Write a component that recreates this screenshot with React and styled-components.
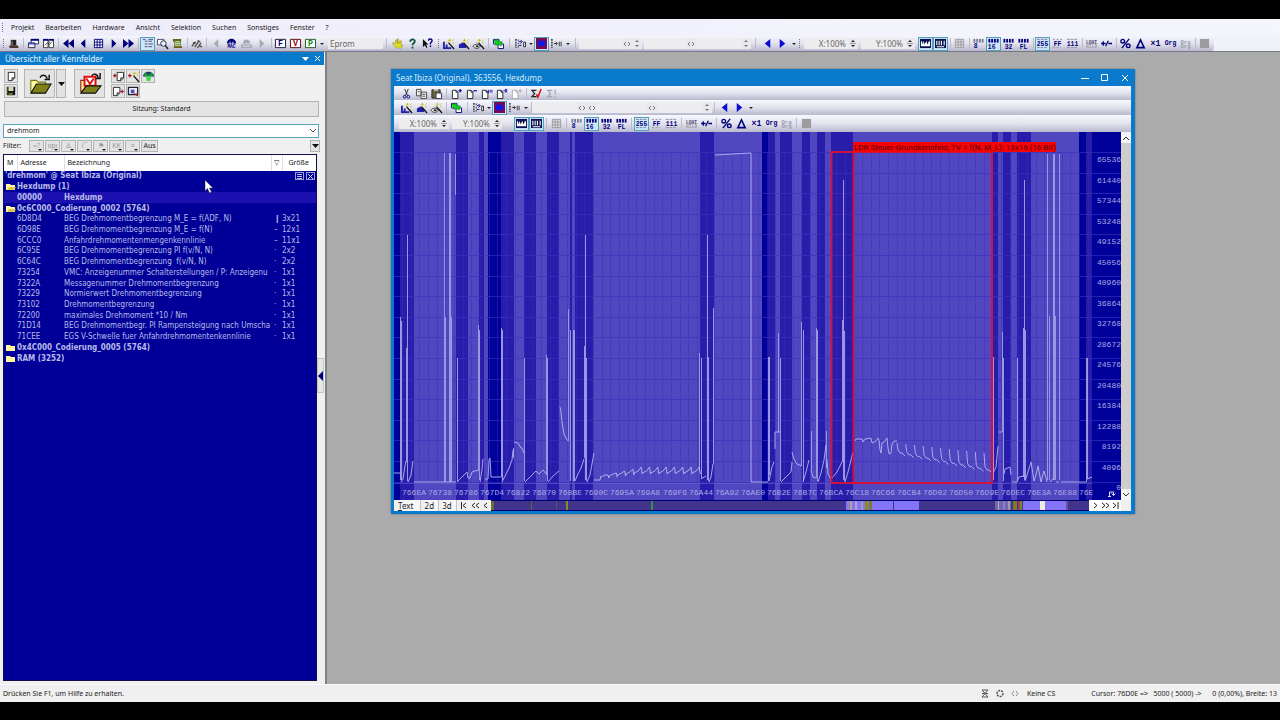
import React from "react";
import styled, { createGlobalStyle, css } from "styled-components";

const GlobalStyle = createGlobalStyle`
  * { box-sizing: border-box; }
  body {
    margin: 0;
    background: #000;
    color: #1c1c1c;
    font: 8px/10px "Noto Sans", sans-serif;
  }
  button, input, select { font: inherit; color: inherit; margin: 0; padding: 0; border: 0; background: none; border-radius: 0; outline: 0; }
  svg { display: block; }
`;

const navy = "#00007c";
const blue = "#0a7acc";

/* ---------- Icons ---------- */

const Txt = ({ x = 6, y = 9, s = 7, c = navy, children }) => (
  <text x={x} y={y} fontSize={s} fill={c} textAnchor="middle" fontWeight="bold" fontFamily="Liberation Mono, monospace">
    {children}
  </text>
);
const Wand = () => (
  <>
    <path d="M6 5 L12 12" stroke="#111" strokeWidth="1.4" />
    <path d="M7 1v3M5.5 2.5h3M10 3l1.5-1.5M4 5l1-1M10 5h1.5" stroke="#c8c000" strokeWidth="1" />
  </>
);
const Page = ({ c = "#222" }) => <path d="M1.5 2.5h4l2 2v7h-6z M5.5 2.5v2h2" fill="#fff" stroke={c} />;
const bits = (c = navy, y = 1) => [0, 3, 6, 9].map((x) => <rect key={x} x={x + 0.5} y={y} width="2" height="4" fill={c} />);

const drawings = {
  hat: <><path d="M3 8V2h6v6z" fill="#222" /><path d="M2 8h8l2 2-2 1H3L1 10z" fill="#4a3030" /><path d="M4 3h1v5H4z" fill="#999" /></>,
  windows: <><path d="M3.500 1.500h8v5h-8z" fill="#fff" stroke="#223" /><path d="M3 1h9v2H3z" fill={navy} /><path d="M.5 5.500h7v5h-7z" fill="#eef" stroke="#223" /><path d="M0 5h8v2H0z" fill="#3949c0" /></>,
  tiles: <><path d="M.5 1.500h5v9h-5zM6.500 1.500h5v9h-5z" fill="#fff" stroke="#333" /><path d="M0 1h6v2H0zM7 1h5v2H7z" fill={navy} /><path d="M2 8l3-3 2 2 3-3" stroke="#333" fill="none" /></>,
  first: <path d="M6 1v10L0 6zM12 1v10L6 6z" fill={navy} />,
  prev: <path d="M8 1v10L3 6z" fill={navy} />,
  next: <path d="M4 1v10l5-5z" fill={navy} />,
  last: <path d="M0 1v10l6-5zM6 1v10l6-5z" fill={navy} />,
  grid: <path d="M1.500 1.500h9v9h-9zM1.500 4.500h9M1.500 7.500h9M4.500 1.500v9M7.500 1.500v9" fill="#fff" stroke={navy} />,
  tree: <path d="M1 1.500h3M3 3.500h3M3 6.500h3M3 9.500h3M7 1.500h5M7 3.500h4M7 6.500h5M7 9.500h4" stroke="#444c70" />,
  magnify: <><path d="M.5 1.500h7v6h-7z" fill="#fff" stroke="#446" /><circle cx="7" cy="6" r="3" fill="#e8f4ff" stroke="#223" /><path d="M9 8l3 4" stroke="#222" strokeWidth="1.600" /></>,
  scroll: <><path d="M1 1h9v3H1zM2 9h9v2H2z" fill="#6b6418" /><path d="M3 3h6v6H3z" fill="#f6f3b0" stroke="#59591d" /><path d="M4 5h4M4 7h4" stroke="#294" /></>,
  wrench: <path d="M1 9l4-5M4 10l5-7M7 11l4-6M2 5l3 1M7 3l3 1M9 8l3 2" stroke="#555" strokeWidth="1.500" />,
  prevOff: <path d="M8 1v10L3 6z" fill="#a9a9b4" />,
  nextOff: <path d="M4 1v10l5-5z" fill="#a9a9b4" />,
  find: <><path d="M1 6c0-7 10-7 10 0z" fill={navy} /><path d="M4 4h1v2H4zM7 4h1v2H7z" fill="#fff" /><Txt y={11} s={5}>MAC</Txt></>,
  findOff: <><path d="M2 6c0-6 8-6 8 0z" fill="#aaaab4" /><path d="M0 7h12v4H0z" fill="#aaaab4" /><path d="M2 9h8" stroke="#e4e4ec" /></>,
  boxF: <><path d="M.5 1.500h11v9H.5z" fill="#fff" stroke="#113" /><Txt s={9}>F</Txt></>,
  boxV: <><path d="M.5 1.500h11v9H.5z" fill="#fff" stroke="#500" /><Txt s={9} c="#a00010">V</Txt></>,
  boxP: <><path d="M.5 1.500h11v9H.5z" fill="#fff" stroke="#151" /><Txt s={9} c="#0a8a20">P</Txt></>,
  hand: <path d="M1 5l3 1V2l1 0 1 4V1h1l1 5 1-3 1 0v5l2 0-2 3H5L1 7z" fill="#e2dc28" stroke="#8d8a1c" strokeWidth=".6" />,
  help: <><path d="M3.500 4c0-3.500 5.500-3 5 0-.3 1.500-2.500 1.500-2.500 4" fill="none" stroke="#115040" strokeWidth="2" /><path d="M5 9.500h2v2H5z" fill="#115040" /></>,
  what: <><path d="M1 1v9l2-2 2 3 1-1-1.500-3H7z" fill="#111" /><path d="M7 3c0-2.500 4-2.500 4 0 0 1.500-2 1.500-2 4M8.500 9h1.500" fill="none" stroke={navy} strokeWidth="1.500" /></>,
  bars: <><path d="M0 4h2v7H0zM3 7h2v4H3zM0 10h9v2H0z" fill="#2020a8" /><Wand /></>,
  box: <><path d="M1 7l4-2 4 3v3H1z" fill="#2020a8" /><Wand /></>,
  eye: <><path d="M0 9c2-3 6-3 8 0-2 3-6 3-8 0z" fill="#fff" stroke="#222" /><path d="M3 8h3v2H3z" fill="#222" /><Wand /></>,
  swap: <><path d="M.5 1.500h6v5h-6zM5.500 6.500h6v5h-6z" fill="#fff" stroke={navy} /><path d="M1 2l5 0 0 2 4 0-1 5-3-2-3 1z" fill="#08d418" stroke="#087014" strokeWidth=".5" /></>,
  rowsIn: <><path d="M1 1v10M3 2.500h1M3 6h1M3 9.500h1" stroke="#222" strokeWidth="1.500" strokeDasharray="2 1" /><path d="M4 4h3M6 2l2 2-2 2M7 8H4" stroke={navy} fill="none" /><path d="M9.500 4.500h2v5h-2z" fill="#fff" stroke="#222" /></>,
  screen: <><path d="M0 0h12v12H0z" fill="#7c0a50" /><path d="M2 3h8v6H2z" fill="#1016e8" /></>,
  rowsOut: <><path d="M1 1v10" stroke="#222" strokeWidth="1.500" strokeDasharray="2 1" /><path d="M3 6h4M5 4l2 2-2 2M9 4v5M11 4v5" stroke="#333" fill="none" /></>,
  goPrev: <path d="M9 1v10L3 6z" fill="#0808d8" />,
  goNext: <path d="M3 1v10l6-5z" fill="#0808d8" />,
  wave: <><path d="M0 1h12v10H0z" fill="#0a1050" /><path d="M1 9V4l1-1 1 4 1-4 1 4 2-4 1 4 2-4 1 1v5z" fill="#fff" /></>,
  comb: <><path d="M0 1h12v10H0z" fill="#0a1050" /><path d="M2 3v5M4.500 3v5M7 3v5M10 3v5M2 9.500h8" stroke="#fff" strokeWidth="1.200" /></>,
  gridOff: <path d="M1.500 1.500h9v9h-9zM1.500 4.500h9M1.500 7.500h9M4.500 1.500v9M7.500 1.500v9" fill="#ddd" stroke="#99999f" />,
  b8: <>{bits("#777b9a")}<Txt x={3} y={11} s={7}>8</Txt></>,
  b16: <>{bits()}<Txt x={4} y={12} s={7}>16</Txt></>,
  b32: <>{bits()}<Txt x={6} y={12} s={7}>32</Txt></>,
  bFl: <>{bits()}<Txt x={6} y={12} s={7}>FL</Txt></>,
  n255: <><path d="M0 1.500h12M0 10.500h12" stroke="#7a7c94" strokeDasharray="3 1" /><Txt y={8.500} s={7}>255</Txt></>,
  nFF: <><path d="M1 1.500h10M1 10.500h9" stroke="#8a8ca0" strokeDasharray="2 2" /><Txt y={8.500} s={7}>FF</Txt></>,
  n111: <><path d="M0 1.500h12M0 10.500h12" stroke="#8a8ca0" strokeDasharray="3 1" /><Txt y={8.500} s={7}>111</Txt></>,
  lohi: <><Txt y={6} s={5} c="#44466a">LOHI</Txt><Txt y={11} s={5} c="#9a9aa6">HILO</Txt></>,
  plusminus: <path d="M0 6h5M2.500 3.500v5M5 9l3-6M8 6h4" stroke={navy} strokeWidth="1.400" />,
  percent: <><circle cx="3" cy="3.500" r="2" fill="none" stroke={navy} strokeWidth="1.500" /><circle cx="9" cy="8.500" r="2" fill="none" stroke={navy} strokeWidth="1.500" /><path d="M2 11l8-10" stroke={navy} strokeWidth="1.500" /></>,
  delta: <path d="M6 2l4 8.500H2z" fill="none" stroke={navy} strokeWidth="1.700" />,
  x1: <Txt y={9} s={9}>×1</Txt>,
  org: <Txt y={8} s={7}>Org</Txt>,
  orgOff: <><Txt y={6} s={6} c="#9a9aa6">Org</Txt><Txt y={11} s={6} c="#9a9aa6">Org</Txt></>,
  square: <path d="M1 1h10v10H1z" fill="#9c9ca0" />,
  cut: <><path d="M4 1l3 7M8 1L5 8" stroke="#222" /><circle cx="4" cy="9.500" r="1.500" fill="none" stroke={navy} /><circle cx="8" cy="9.500" r="1.500" fill="none" stroke={navy} /></>,
  copy: <path d="M.5 1.500h5v7h-5zM5.500 4.500h6v7h-6zM7 7h3M7 9h3M2 4h2" fill="#eee" stroke="#444" />,
  paste: <><path d="M1 2h9v9H1z" fill="#6b6540" stroke="#222" /><path d="M3 1h5v2H3z" fill="#ccc" /><path d="M5.500 5.500h6v6h-6z" fill="#fff" stroke="#336" /></>,
  pagePlus: <><Page /><path d="M8 3h4M10 1v4" stroke="#0808b0" strokeWidth="1.300" /></>,
  pageMinus: <><Page /><path d="M8 3h4" stroke="#0808b0" strokeWidth="1.300" /></>,
  pageBoth: <><Page /><path d="M8 2v4M10 2v3M12 2v3" stroke="#0808b0" /></>,
  pageX: <><Page /><path d="M8 3h2M10 1l2 4M12 1l-2 4" stroke="#0808b0" /></>,
  pageOff: <><Page c="#aaa" /><path d="M8 3h4M10 1v4" stroke="#aaa" /></>,
  sumOk: <><path d="M6 2.500H1l3 3.500-3 3.500h5" fill="none" stroke="#222" strokeWidth="1.300" /><path d="M6 7l1.500 3L11 1" fill="none" stroke="#d81010" strokeWidth="1.700" /></>,
  sumOff: <path d="M7 2.500H2l3 3.500-3 3.500h5M10 2v5M10 9v2" fill="none" stroke="#a4a4ae" strokeWidth="1.300" />,
  page: <path d="M2.500 1.500h7v6l-3 3h-4zM9.500 7.500h-3v3" fill="#fff" stroke="#222" />,
  disk: <><path d="M1 1h10v10H1z" fill="#111" /><path d="M3 1h6v5H3z" fill="#d8d8c0" /><path d="M1 1h1v9H1zM3 8h5v3H3z" fill="#6c6c2c" /></>,
  folder: <><path d="M1 10V4h3l1 1h4v5z" fill="#fffca0" stroke="#76761c" strokeWidth=".6" /><path d="M1 11l3-5h8l-3 5z" fill="#808018" stroke="#111" strokeWidth=".6" /><path d="M6 2.500c1-2 3-1.500 4 .5M11 1v2.500H8.500" fill="none" stroke="#111" strokeWidth=".8" /></>,
  folderV: <><path d="M1 10V4h3v6z" fill="#fffca0" stroke="#8a1c10" strokeWidth=".6" /><path d="M3 2h6v5H3z" fill="#fff" stroke="#e01010" strokeWidth="1.100" /><path d="M4 3l2 3 2-3" fill="none" stroke="#e01010" /><path d="M1 11l3-4h8l-3 4z" fill="#808018" stroke="#111" strokeWidth=".6" /><path d="M7 1.500c1-1.500 3-1 3.500 1M11.500 0v3H9" fill="none" stroke="#111" strokeWidth=".8" /></>,
  importPage: <><path d="M4.500 1.500h7v6l-3 3h-4zM11 7.500H8.500v3" fill="#fff" stroke="#222" /><path d="M0 5h4M2 3v4" stroke="#b01020" strokeWidth="1.300" /></>,
  importWand: <><path d="M0 5h4M2 3v4" stroke="#b01020" strokeWidth="1.300" /><Wand /></>,
  globe: <><path d="M0 6c0-7 12-7 12 0z" fill="#1c3c70" /><path d="M2 2l4 2 4-2 1 4-5-1-5 1z" fill="#18a030" /><path d="M3 6h6l-1 5H4z" fill="#48d858" /></>,
  exportPage: <><path d="M.5 1.500h7v6l-3 3h-4zM7 7.500H4.500v3" fill="#fff" stroke="#222" /><path d="M8 6h4M10 4v4" stroke="#b01020" strokeWidth="1.300" /></>,
  exportPic: <><path d="M.5 1.500h10v8H.5z" fill="#eef" stroke="#223" strokeWidth="1.400" /><path d="M3 4h4v4H3z" fill="#4850b0" /><path d="M7 8l4 3M10 7v4" stroke="#b01020" /></>,
};

const Glyph = styled.svg.attrs({ viewBox: "0 0 12 12", fill: "none", "aria-hidden": true })`
  width: ${(p) => p.$s || 11}px;
  height: ${(p) => p.$s || 11}px;
  flex: none;
  overflow: visible;
`;
const Icon = ({ name, size }) => <Glyph $s={size}>{drawings[name]}</Glyph>;

/* ---------- Toolbar parts ---------- */

const ToolBtn = styled.button`
  width: 15px;
  height: 14px;
  flex: none;
  display: flex;
  align-items: center;
  justify-content: center;
  ${(p) => p.$on && css`background: #cfe6f8; border: 1px solid #56a0bc;`}
`;
const Sep = styled.span`
  flex: none;
  width: ${(p) => p.$w || 5}px;
  height: 11px;
  background: linear-gradient(#b9b9ca, #b9b9ca) center / ${(p) => (p.$plain ? 0 : 1)}px 100% no-repeat;
`;
const Grip = styled.span`
  flex: none;
  width: 1px;
  height: 9px;
  margin: 0 2px 0 1px;
  border-left: 1px dotted #77778a;
`;
const DropBtn = styled.button`
  width: ${(p) => p.$w || 8}px;
  height: 14px;
  flex: none;
  display: flex;
  align-items: center;
  justify-content: center;
  &::after { content: ""; border: 2px solid transparent; border-top-color: #222; border-bottom: 0; }
`;
const Field = styled.input`
  flex: none;
  width: ${(p) => p.$w}px;
  height: 11px;
  padding: 0 2px;
  background: #ededf0;
  color: #666;
  text-align: ${(p) => (p.$left ? "left" : "right")};
`;
const Spin = styled.button`
  width: 10px;
  height: 11px;
  flex: none;
  display: flex;
  align-items: center;
  justify-content: center;
  background: #e9e9ed;
`;

const Tool = ({ n, on, label }) => (
  <ToolBtn type="button" $on={on} aria-label={label || n} aria-pressed={on}>
    <Icon name={n} />
  </ToolBtn>
);
const Tools = ({ list }) => list.split(" ").map((t) => <Tool key={t} n={t.replace("!", "")} on={t.endsWith("!") || undefined} />);
const LeftRight = () => (
  <Spin type="button" aria-label="Vor und zurück"><svg width="8" height="6"><path d="M3 1L1 3l2 2M5 1l2 2-2 2" fill="none" stroke="#777" /></svg></Spin>
);
const UpDown = ({ dark }) => (
  <Spin type="button" aria-label="Wert ändern"><svg width="6" height="9"><path d="M3 1l2 2H1zM3 8l2-2H1z" fill={dark ? "#222" : "#777"} />{dark && <path d="M0 4.500h6" stroke="#999" />}</svg></Spin>
);

const ViewTools = ({ docked }) => (
  <>
    <Tools list="bars box eye" />
    <Sep />
    <Tools list="swap" />
    <Sep $w={7} />
    <Tools list="rowsIn" />
    <DropBtn type="button" $w={6} aria-label="Zeilen" />
    <Tools list="screen! rowsOut" />
    <DropBtn type="button" aria-label="Spalten" />
    <Sep $w={docked ? 7 : 2} />
    <Field $w={docked ? 43 : 45} aria-label="Adresse" />
    <LeftRight />
    {docked ? <UpDown /> : <LeftRight />}
    {docked && <Sep $w={2} $plain />}
    <Field $w={docked ? 42 : 50} aria-label="Spaltenzahl" />
    <LeftRight />
    <Field $w={45} aria-label="Faktor" />
    <UpDown />
    <Sep $w={docked ? 9 : 5} />
    <Tools list="goPrev goNext" />
    <DropBtn type="button" aria-label="Weitere" />
  </>
);

const ZoomTools = ({ docked }) => {
  const w = docked ? 4 : 5;
  const fw = docked ? 44 : 40;
  return (
    <>
      <Field $w={fw} defaultValue="X:100%" aria-label="X-Zoom" />
      <UpDown dark />
      <Sep $w={3} $plain />
      <Field $w={fw} defaultValue="Y:100%" aria-label="Y-Zoom" />
      <UpDown dark />
      <Sep $w={docked ? 3 : 12} $plain />
      <Tools list="wave! comb!" />
      <Sep $w={w} />
      <Tools list="gridOff" />
      <Sep $w={w} />
      <Tools list="b8 b16! b32 bFl" />
      <Sep $w={w} />
      <Tools list="n255! nFF n111" />
      <Sep $w={w} />
      <Tools list="lohi plusminus" />
      <Sep $w={w} />
      <Tools list="percent delta x1 org orgOff" />
      <Sep $w={w} />
      <Tools list="square" />
    </>
  );
};

/* ---------- Application frame ---------- */

const Frame = styled.div`
  min-height: 100vh;
  padding: 19px 0 18px;
  display: flex;
  flex-direction: column;
`;
const MenuBar = styled.nav`
  height: 17px;
  flex: none;
  display: flex;
  align-items: center;
  padding-left: 1px;
  background: linear-gradient(90deg, #eeecfa, #f4f6fc);
`;
const MenuItem = styled.button`
  font-size: 7px;
  padding: 0 5px 0 6px;
  color: #222;
`;
const ToolStrip = styled.div`
  height: 16px;
  flex: none;
  background: #f0f2fa;
  border-bottom: 1px solid #77778c;
  display: flex;
`;
const StripInner = styled.div`
  display: flex;
  align-items: center;
  padding: 0 2px;
  border-radius: 0 0 3px 0;
  background: linear-gradient(#f5f5fc, #e2e2ee 50%, #b9b9ce);
`;
const Main = styled.main`
  flex: 1;
  display: flex;
`;

/* ---------- Map list panel ---------- */

const Panel = styled.aside`
  flex: none;
  width: 327px;
  display: flex;
  flex-direction: column;
  background: #f0f0f0;
  border-right: 2px solid #808088;
  position: relative;
`;
const PanelTitle = styled.header`
  height: 13px;
  width: 324px;
  display: flex;
  align-items: center;
  padding: 0 2px 0 5px;
  gap: 3px;
  background: ${blue};
  color: #e8f4ff;
`;
const PanelName = styled.span`
  flex: 1;
`;
const Caption = styled.button`
  width: 9px;
  height: 11px;
  display: grid;
  place-items: center;
`;
const Actions = styled.div`
  display: flex;
  padding: 4px 0 0 4px;
`;
const Stack = styled.div`
  display: grid;
  grid-template-columns: repeat(${(p) => p.$cols || 1}, 14px);
  gap: 1px;
  margin-right: 6px;
`;
const Raised = styled.button`
  width: ${(p) => p.$w || 14}px;
  height: ${(p) => p.$h || 14}px;
  display: flex;
  align-items: center;
  justify-content: center;
  flex: none;
  background: #e3e3e3;
  border: 1px solid #b4b4b4;
  margin-right: ${(p) => p.$r || 0}px;
`;
const Session = styled(Raised)`
  width: auto;
  height: 16px;
  margin: 3px 6px 0 4px;
  font-size: 7px;
`;
const Combo = styled.div`
  margin: 7px 6px 0 3px;
  height: 14px;
  display: flex;
  align-items: center;
  background: #fff;
  border: 1px solid #5ba3b8;
  padding: 0 2px;
`;
const ComboInput = styled.input`
  flex: 1;
  padding-left: 1px;
  font-size: 7px;
`;
const FilterRow = styled.div`
  display: flex;
  align-items: center;
  gap: 1px;
  height: 16px;
  padding: 0 5px 0 3px;
  font-size: 7px;
`;
const FilterLabel = styled.span`
  width: 25px;
`;
const FilterBtn = styled(Raised)`
  width: ${(p) => p.$w || 15}px;
  height: 12px;
  color: #999;
  position: relative;
  ${(p) => p.$drop && css`
    &::after { content: ""; position: absolute; right: 1px; bottom: 0; border: 2px solid transparent; border-top-color: #222; border-bottom: 0; }
  `}
`;
const FilterBtnDark = styled(FilterBtn)`
  color: #222;
`;
const Spacer = styled.span`
  flex: 1;
`;
const ListBox = styled.div`
  flex: 1;
  width: 314px;
  margin: 0 0 3px 3px;
  background: #000098;
  border: 1px solid #10104a;
`;
const Table = styled.table`
  width: 100%;
  height: 209px;
  table-layout: fixed;
  border-collapse: collapse;
  color: #b9bce8;
  font-family: "DejaVu Sans Condensed", "Noto Sans", sans-serif;
  td, th { padding: 0; white-space: pre; overflow: hidden; text-align: left; font-weight: normal; line-height: 10px; }
  th { height: 16px; background: #fff; color: #222; font-family: "Noto Sans", sans-serif; font-size: 7px; }
  th + th { border-left: 1px solid #e0e0e4; }
`;
const Row = styled.tr`
  background: ${(p) => (p.$sel ? "#1c10b0" : "none")};
  td { font-weight: ${(p) => (p.$bold ? "bold" : "normal")}; }
`;
const HeadCell = styled.th`
  && { padding-left: ${(p) => p.$p || 3}px; }
`;
const KindCell = styled.td`
  && { padding-left: 3px; }
`;
const GroupCell = styled.span`
  display: flex;
  align-items: center;
  gap: 1px;
  padding-left: 2px;
`;
const QueryCell = styled.span`
  display: flex;
  align-items: center;
  gap: 2px;
  padding: 0 1px;
`;
const MiniBtn = styled.button`
  width: 9px;
  height: 8px;
  border: 1px solid #9a9cd8;
  display: grid;
  place-items: center;
`;
const Handle = styled.button`
  position: absolute;
  right: 1px;
  top: 306px;
  width: 7px;
  height: 35px;
  border: 1px solid #c4c4c4;
  background: #e6e6e6;
  display: grid;
  place-items: center;
`;
const Pointer = styled.svg`
  position: absolute;
  left: 204px;
  top: 128px;
`;

const maps = [
  ["6D8D4", "BEG Drehmomentbegrenzung M_E = f(ADF, N)", "❙", "3x21"],
  ["6D98E", "BEG Drehmomentbegrenzung M_E = f(N)", "–", "12x1"],
  ["6CCC0", "Anfahrdrehmomentenmengenkennlinie", "–", "11x1"],
  ["6C95E", "BEG Drehmomentbegrenzung PI f(v/N, N)", "·", "2x2"],
  ["6C64C", "BEG Drehmomentbegrenzung  f(v/N, N)", "·", "2x2"],
  ["73254", "VMC: Anzeigenummer Schalterstellungen / P: Anzeigenu", "·", "1x1"],
  ["7322A", "Messagenummer Drehmomentbegrenzung", "·", "1x1"],
  ["73229", "Normierwert Drehmomentbegrenzung", "·", "1x1"],
  ["73102", "Drehmomentbegrenzung", "·", "1x1"],
  ["72200", "maximales Drehmoment *10 / Nm", "·", "1x1"],
  ["71D14", "BEG Drehmomentbegr. PI Rampensteigung nach Umscha", "·", "1x1"],
  ["71CEE", "EGS V-Schwelle fuer Anfahrdrehmomentenkennlinie", "·", "1x1"],
];

const Group = ({ open, children }) => (
  <Row $bold>
    <td colSpan={5}>
      <GroupCell>
        <svg width="10" height="8">
          <path d="M0 7V1h4l1 1h4v5z" fill="#fff6a0" />
          {open && <path d="M1 7l2-3h7L8 7z" fill="#d8c850" />}
        </svg>
        {children}
      </GroupCell>
    </td>
  </Row>
);

const filters = ["=?", "ııpı", "Δ", "i¯", "⚑", "KK", "≡"];

const MapPanel = () => (
  <Panel>
    <PanelTitle>
      <PanelName>Übersicht aller Kennfelder</PanelName>
      <Caption type="button" aria-label="Optionen"><svg width="7" height="4"><path d="M0 0h7L3.500 4z" fill="#fff" /></svg></Caption>
      <Caption type="button" aria-label="Schließen"><svg width="7" height="7"><path d="M1 1l5 5M6 1L1 6" stroke="#fff" /></svg></Caption>
    </PanelTitle>
    <Actions>
      <Stack>
        <Raised type="button" aria-label="Neu"><Icon name="page" /></Raised>
        <Raised type="button" aria-label="Speichern"><Icon name="disk" size={10} /></Raised>
      </Stack>
      <Raised type="button" $w={31} $h={29} $r={1} aria-label="Öffnen"><Icon name="folder" size={22} /></Raised>
      <Raised type="button" $w={10} $h={29} $r={8} aria-label="Zuletzt geöffnet"><svg width="7" height="4"><path d="M0 0h7L3.500 4z" fill="#111" /></svg></Raised>
      <Raised type="button" $w={31} $h={29} $r={6} aria-label="Projekt öffnen"><Icon name="folderV" size={22} /></Raised>
      <Stack $cols={3}>
        {["importPage", "importWand", "globe", "exportPage", "exportPic"].map((n) => (
          <Raised key={n} type="button" aria-label={n}><Icon name={n} /></Raised>
        ))}
      </Stack>
    </Actions>
    <Session type="button">Sitzung: Standard</Session>
    <Combo>
      <ComboInput aria-label="Suche" defaultValue="drehmom" />
      <svg width="6" height="4"><path d="M0 0l3 3 3-3" fill="none" stroke="#555" /></svg>
    </Combo>
    <FilterRow>
      <FilterLabel>Filter:</FilterLabel>
      {filters.map((f) => <FilterBtn key={f} type="button" $drop>{f}</FilterBtn>)}
      <FilterBtnDark type="button" $w={17}>Aus</FilterBtnDark>
      <Spacer />
      <FilterBtn type="button" $w={10} aria-label="Filtermenü"><svg width="7" height="4"><path d="M0 0h7L3.500 4z" fill="#111" /></svg></FilterBtn>
    </FilterRow>
    <ListBox>
      <Table>
        <colgroup>
          <col width="13" /><col width="47" /><col width="207" /><col width="11" /><col />
        </colgroup>
        <thead>
          <tr><HeadCell>M</HeadCell><HeadCell>Adresse</HeadCell><HeadCell>Bezeichnung</HeadCell><HeadCell $p={2}>▽</HeadCell><HeadCell $p={6}>Größe</HeadCell></tr>
        </thead>
        <tbody>
          <Row $bold>
            <td colSpan={5}>
              <QueryCell>
                <PanelName>'drehmom' @ Seat Ibiza (Original)</PanelName>
                <MiniBtn type="button" aria-label="Liste"><svg width="5" height="5"><path d="M0 .5h5M0 2.500h5M0 4.500h5" stroke="#b9bce8" /></svg></MiniBtn>
                <MiniBtn type="button" aria-label="Entfernen"><svg width="5" height="5"><path d="M0 0l5 5M5 0L0 5" stroke="#d9dcff" /></svg></MiniBtn>
              </QueryCell>
            </td>
          </Row>
          <Group open>Hexdump (1)</Group>
          <Row $bold $sel><td /><td>00000</td><td colSpan={3}>Hexdump</td></Row>
          <Group open>0c6C000_Codierung_0002 (5764)</Group>
          {maps.map(([a, n, k, s]) => (
            <Row key={a}><td /><td>{a}</td><td>{n}</td><KindCell>{k}</KindCell><td>{s}</td></Row>
          ))}
          <Group>0x4C000_Codierung_0005 (5764)</Group>
          <Group>RAM (3252)</Group>
        </tbody>
      </Table>
    </ListBox>
    <Handle type="button" aria-label="Leiste einklappen"><svg width="5" height="10"><path d="M5 0v10L0 5z" fill={navy} /></svg></Handle>
    <Pointer width="10" height="14"><path d="M1 0v11l2.500-2.500L5.500 13l2-1-2-4H9z" fill="#fff" stroke="#223" strokeWidth=".5" /></Pointer>
  </Panel>
);

/* ---------- Hexdump window ---------- */

const Desktop = styled.section`
  flex: 1;
  position: relative;
  background: #ababab;
`;
const Window = styled.article`
  position: absolute;
  left: 64px;
  top: 17px;
  width: 744px;
  padding: 0 4px 3px 3px;
  background: ${blue};
  box-shadow: 0 0 2px #666;
`;
const TitleBar = styled.header`
  height: 17px;
  display: flex;
  align-items: center;
  padding: 0 2px;
  gap: 11px;
  color: #d8ecfb;
`;
const WindowBtn = styled.button`
  width: 9px;
  height: 11px;
  display: grid;
  place-items: center;
`;
const Bar = styled.div`
  height: ${(p) => p.$h}px;
  display: flex;
  align-items: center;
  padding-left: 5px;
  background: linear-gradient(#f8f8ff, #e2e2ee 50%, #b9b9ce);
  overflow: hidden;
`;
const ChartRow = styled.div`
  display: flex;
`;
const Plot = styled.svg`
  flex: 1;
  min-width: 0;
  height: auto;
`;
const ScrollTrack = styled.div`
  width: 10px;
  display: flex;
  flex-direction: column;
  justify-content: space-between;
  background: #cdcdcd;
`;
const ScrollBtn = styled.button`
  height: 11px;
  width: 10px;
  background: #f4f4f4;
  display: grid;
  place-items: center;
`;
const Footer = styled.div`
  display: flex;
  height: 11px;
  background: #f0f0f0;
`;
const Tabs = styled.div`
  width: 97px;
  display: flex;
  align-items: center;
  justify-content: space-between;
  padding: 0 3px 0 4px;
`;
const Tab = styled.button`
  height: 11px;
  padding-right: ${(p) => p.$r || 4}px;
  border-right: 1px solid #c4c4c4;
  background: #f7f7f7;
`;
const Overview = styled.svg`
  flex: 1;
  min-width: 0;
  height: 11px;
`;
const Nav = styled.div`
  width: 32px;
  margin-right: 10px;
  display: flex;
  align-items: center;
  justify-content: space-around;
  background: #fff;
`;

const DARK = "#00009a", MID = "#281cab", LIGHT = "#5047c1";
const bands = [
  [394, 400, DARK], [400, 414, MID], [414, 456, LIGHT], [456, 468, MID], [468, 479, LIGHT], [479, 484, MID],
  [484, 488, LIGHT], [488, 501, DARK], [501, 514, MID], [514, 524, LIGHT], [524, 536, MID], [536, 547, LIGHT],
  [547, 559, MID], [559, 570, LIGHT], [570, 572, MID], [572, 575, LIGHT], [575, 593, MID], [593, 700, LIGHT],
  [700, 714, MID], [714, 762, LIGHT], [762, 768, DARK], [768, 775, MID], [775, 780, LIGHT], [780, 792, MID],
  [792, 802, LIGHT], [802, 810, MID], [810, 817, LIGHT], [817, 825, MID], [825, 831, LIGHT], [831, 853, MID],
  [853, 992, LIGHT], [992, 998, MID], [998, 1003, LIGHT], [1003, 1011, MID], [1011, 1017, LIGHT], [1017, 1031, MID],
  [1031, 1079, LIGHT], [1079, 1086, DARK], [1086, 1092, MID], [1092, 1121, DARK],
];
/* x, top, bottom of the single-sample spikes */
const spikes = [
  [400, 317, 480], [401, 321, 480], [406, 348, 462], [407, 235, 481], [444, 153, 482], [445, 317, 482], [449, 153, 482], [450, 153, 482],
  [451, 317, 482], [455, 154, 195], [457, 358, 482], [478, 325, 470], [479, 330, 480], [501, 328, 477], [502, 330, 480], [513, 448, 458],
  [524, 358, 481], [546, 355, 474], [547, 358, 481], [568, 309, 440], [570, 330, 481], [573, 330, 481], [574, 330, 481], [584, 346, 458],
  [585, 235, 480], [586, 358, 481], [699, 353, 471], [701, 358, 478], [707, 235, 480], [708, 357, 481], [713, 308, 464],
  [768, 357, 481], [769, 357, 475], [778, 333, 432], [780, 358, 481], [801, 322, 466], [803, 330, 481], [811, 431, 470], [816, 328, 478],
  [817, 330, 481], [826, 431, 468], [842, 320, 462], [843, 180, 480], [844, 331, 481], [992, 357, 470], [993, 357, 480],
  [1002, 332, 432], [1003, 358, 481], [1017, 358, 481], [1023, 328, 477], [1024, 180, 480], [1025, 330, 480],
  [1047, 154, 480], [1049, 316, 480], [1053, 154, 480], [1054, 154, 480], [1055, 316, 480], [1059, 154, 480], [1086, 358, 482], [1087, 358, 479],
];
const curves = [
  "394,473 400,473", "401,482 403,479 405,466 406,461", "408,482 411,475 413,461", "414,482 456,482",
  "457,482 462,477 467,472 468,478 470,478 472,472 475,471 479,470", "480,482 482,470 483,459", "485,479 488,479 489,460 490,458 491,477 501,477",
  "502,482 505,476 509,468 512,460 513,450", "514,442 518,443 521,448 522,448 524,453", "525,482 532,475 536,471 539,474 543,470 547,475",
  "548,482 553,476 559,471", "560,407 561,412 562,422 564,434 567,440 569,441", "575,481 578,474 581,468 584,459", "587,482 590,475 592,464 594,453",
  "594,480 600,480 601,476", "701,479 706,476", "709,482 711,477 713,464", "715,155 750,153 751,153 751,482 768,482",
  "769,481 772,467 774,462", "775,449 775,432 780,432", "781,482 791,472 792,462", "792,452 794,459 797,464 802,466",
  "803,482 806,472 809,460", "811,470 813,477 816,478", "818,482 821,473 824,460 826,445", "827,460 828,474 831,479 837,472 842,462",
  "845,482 848,472 853,452",
  "855,441 856,439 862,439 863,442 865,439 871,438 872,443 876,441 878,438 879,440 880,450 881,453 882,443 885,441 887,438 888,448 889,454 891,453 892,444 894,441 897,441",
  "993,473 996,467 998,446", "999,432 1002,432", "1004,474 1005,469 1010,467 1011,475", "1012,482 1017,482 1019,477 1024,476",
  "1025,481 1028,472 1031,462 1034,481 1036,475 1038,466 1041,482 1044,471 1047,482", "1050,482 1053,479", "1056,482 1059,482", "1061,482 1086,482", "1087,479 1092,477",
];
const ripple = Array.from({ length: 12 }, (_, i) => {
  const x = 601 + i * 8.3, t = 474 - Math.min(i, 4), peak = Math.min(i, 4);
  return `${x},${t + 3} ${x + 4},${t + 1} ${x + 7},${t - peak + 1} ${x + 8},${t + 4}`;
}).join(" ");
const decay = Array.from({ length: 11 }, (_, i) => {
  const x = 897 + i * 8.7, top = 443 + i, low = 454 + i * 1.7;
  return `${x},${top} ${x + 1},${low - 4} ${x + 3},${low - 1} ${x + 5},${low - 1} ${x + 8},${low + 2}`;
});
const addresses = "766EA 76738 76786 767D4 76822 76870 768BE 7690C 7695A 769A8 769F6 76A44 76A92 76AE0 76B2E 76B7C 76BCA 76C18 76C66 76CB4 76D02 76D50 76D9E 76DEC 76E3A 76E88 76E".split(" ");

const HexPlot = () => (
  <Plot viewBox="394 132 727 368" role="img" aria-label="Hexdump 2d">
    {bands.map(([a, b, c]) => <rect key={a} x={a} y="132" width={b - a} height="368" fill={c} shapeRendering="crispEdges" />)}
    <g stroke="#3d30bb" opacity=".65" shapeRendering="crispEdges">
      {Array.from({ length: 17 }, (_, i) => <path key={i} d={`M394 ${Math.round(152 + i * 20.6)}.5H1121`} />)}
      {Array.from({ length: 80 }, (_, i) => <path key={i} d={`M${Math.round(402 + i * 8.68)}.5 152V482`} opacity=".7" />)}
    </g>
    <path d="M394 483.500H1092" stroke="#6a60cc" opacity=".6" />
    <g stroke="#9a96e0" shapeRendering="crispEdges">
      {spikes.map(([x, a, b], i) => <path key={i} d={`M${x}.5 ${a}V${b}`} />)}
    </g>
    <g fill="none" stroke="#b9b6ee" strokeWidth=".9">
      {[...curves, ripple, ...decay].map((p) => <polyline key={p} points={p} />)}
    </g>
    <g fill="none" stroke="#d0123c" strokeWidth="2">
      <path d="M831.500 152H992V483H831.500zM853.500 152V483" />
    </g>
    <rect x="853" y="142" width="203" height="10" fill="#f40404" />
    <text x="854" y="150" fontSize="8" fill="#560010" fontFamily="Roboto, sans-serif">LDR Steuer-Grundkennfeld, TV = f(N, M_L): 13x16 (16 Bit)</text>
    <g fontSize="8" fill="#aaa8e0" fontFamily="Liberation Mono, monospace">
      {addresses.map((a, i) => <text key={a} x={Math.round(402 + i * 26.05)} y="495">{a}</text>)}
      {Array.from({ length: 17 }, (_, i) => (
        <text key={i} x="1121" y={Math.round(162 + i * 20.5)} textAnchor="end">{65536 - i * 4096}</text>
      ))}
    </g>
    <path d="M1109.500 497v-5h4v3M1111.500 493.500l2 2 2-2M1108 496.500h3" fill="none" stroke="#e0e0fc" />
  </Plot>
);

/* x, width, colour on the memory overview */
const regions = [
  [491, 3, "#70702c"], [531, 1, "#6c6440"], [556, 1, "#5c5460"], [566, 2, "#8c8c1c"], [651, 2, "#3c8c4c"], [846, 73, "#8474f8"],
  [848, 1, "#a08c90"], [850, 2, "#b0a0a0"], [855, 2, "#b0a0c8"], [861, 2, "#a09cc0"], [865, 3, "#8c8c1c"], [869, 3, "#7c7c20"], [893, 1, "#40348c"],
  [995, 16, "#74689c"], [998, 1, "#b0a8e0"], [1003, 2, "#8474f8"], [1008, 2, "#a098b8"], [1013, 4, "#7c7c20"], [1018, 2, "#b03450"],
  [1020, 2, "#6c8c2c"], [1023, 45, "#8474f8"], [1040, 5, "#eeeade"], [1066, 2, "#70509c"],
];

const HexWindow = () => (
  <Window>
    <TitleBar>
      <PanelName>Seat Ibiza (Original), 363556, Hexdump</PanelName>
      <WindowBtn type="button" aria-label="Minimieren"><svg width="8" height="8"><path d="M0 4.500h8" stroke="#fff" /></svg></WindowBtn>
      <WindowBtn type="button" aria-label="Maximieren"><svg width="8" height="8"><path d="M.5 .5h6v6h-6z" fill="none" stroke="#fff" /></svg></WindowBtn>
      <WindowBtn type="button" aria-label="Schließen"><svg width="8" height="8"><path d="M1 1l6 6M7 1L1 7" stroke="#fff" /></svg></WindowBtn>
    </TitleBar>
    <Bar $h={14}>
      <Tools list="cut copy paste" />
      <Sep />
      <Tools list="pagePlus pageMinus pageBoth pageX pageOff" />
      <Sep />
      <Tools list="sumOk sumOff" />
    </Bar>
    <Bar $h={15}><ViewTools /></Bar>
    <Bar $h={17}><ZoomTools /></Bar>
    <ChartRow>
      <HexPlot />
      <ScrollTrack>
        <ScrollBtn type="button" aria-label="Nach oben"><svg width="6" height="4"><path d="M0 4l3-3 3 3" fill="none" stroke="#333" /></svg></ScrollBtn>
        <ScrollBtn type="button" aria-label="Nach unten"><svg width="6" height="4"><path d="M0 0l3 3 3-3" fill="none" stroke="#333" /></svg></ScrollBtn>
      </ScrollTrack>
    </ChartRow>
    <Footer>
      <Tabs>
        <Tab type="button" $r={7}><u>T</u>ext</Tab>
        <Tab type="button">2d</Tab>
        <Tab type="button">3d</Tab>
        <svg width="28" height="7"><path d="M1.500 0v7M6 1L3 3.500 6 6M15 1l-3 2.500L15 6M19 1l-3 2.500L19 6M27 1l-3 2.500L27 6" fill="none" stroke="#222" /></svg>
      </Tabs>
      <Overview viewBox="491 500 598 11" preserveAspectRatio="none" shapeRendering="crispEdges">
        <rect x="491" y="500" width="598" height="11" fill="#000070" />
        <rect x="491" y="501" width="598" height="9" fill="#40348c" />
        {regions.map(([x, w, c]) => <rect key={x} x={x} y="501" width={w} height="9" fill={c} />)}
      </Overview>
      <Nav><svg width="28" height="7"><path d="M3 1l3 2.500L3 6M11 1l3 2.500L11 6M15 1l3 2.500L15 6M22 1l3 2.500L22 6M27 0v7" fill="none" stroke="#222" /></svg></Nav>
    </Footer>
  </Window>
);

/* ---------- Status bar ---------- */

const StatusBar = styled.footer`
  height: 18px;
  flex: none;
  display: flex;
  align-items: center;
  padding: 0 3px;
  font-size: 7px;
  background: #f0f0f0;
  border-top: 1px solid #fafafa;
`;
const StatusIcons = styled.span`
  display: flex;
  gap: 7px;
  margin-right: 8px;
`;
const StatusText = styled.span`
  margin-right: ${(p) => p.$r || 0}px;
  white-space: pre;
`;

const menus = ["Projekt", "Bearbeiten", "Hardware", "Ansicht", "Selektion", "Suchen", "Sonstiges", "Fenster", "?"];

export default function App() {
  return (
    <Frame>
      <GlobalStyle />
      <MenuBar>
        <Grip />
        {menus.map((m) => <MenuItem key={m} type="button">{m}</MenuItem>)}
      </MenuBar>
      <ToolStrip>
        <StripInner>
          <Grip />
          <Tools list="hat" />
          <Sep />
          <Tools list="windows tiles" />
          <Sep />
          <Tools list="first prev grid next last" />
          <Sep $w={4} />
          <Tools list="tree! magnify scroll" />
          <Sep $w={4} />
          <Tools list="wrench" />
          <Sep />
          <Tools list="prevOff find findOff nextOff" />
          <Sep $w={4} />
          <Tools list="boxF boxV boxP" />
          <DropBtn type="button" aria-label="Weitere" />
          <Sep $w={2} $plain />
          <Field $w={55} $left defaultValue="Eprom" aria-label="Speichertyp" />
          <Sep $w={7} />
          <Tools list="hand help what" />
          <Sep $w={2} $plain />
          <Grip />
          <ViewTools docked />
          <Grip />
          <Sep $w={2} $plain />
          <ZoomTools docked />
        </StripInner>
      </ToolStrip>
      <Main>
        <MapPanel />
        <Desktop><HexWindow /></Desktop>
      </Main>
      <StatusBar>
        <StatusText>Drücken Sie F1, um Hilfe zu erhalten.</StatusText>
        <Spacer />
        <StatusIcons>
          <svg width="8" height="9"><path d="M1 1h6L1 8h6zM1 4.500h6" fill="none" stroke="#555" /></svg>
          <svg width="8" height="9"><circle cx="4" cy="4.500" r="3" fill="none" stroke="#555" strokeWidth="1.500" strokeDasharray="2 1" /></svg>
          <svg width="8" height="9"><path d="M3 2L1 4.500 3 7M5 2l2 2.500L5 7" fill="none" stroke="#888" /></svg>
        </StatusIcons>
        <StatusText $r={36}>Keine CS</StatusText>
        <StatusText>{"Cursor: 76D0E =>   5000 ( 5000) ->      0 (0,00%), Breite: 13"}</StatusText>
      </StatusBar>
    </Frame>
  );
}
